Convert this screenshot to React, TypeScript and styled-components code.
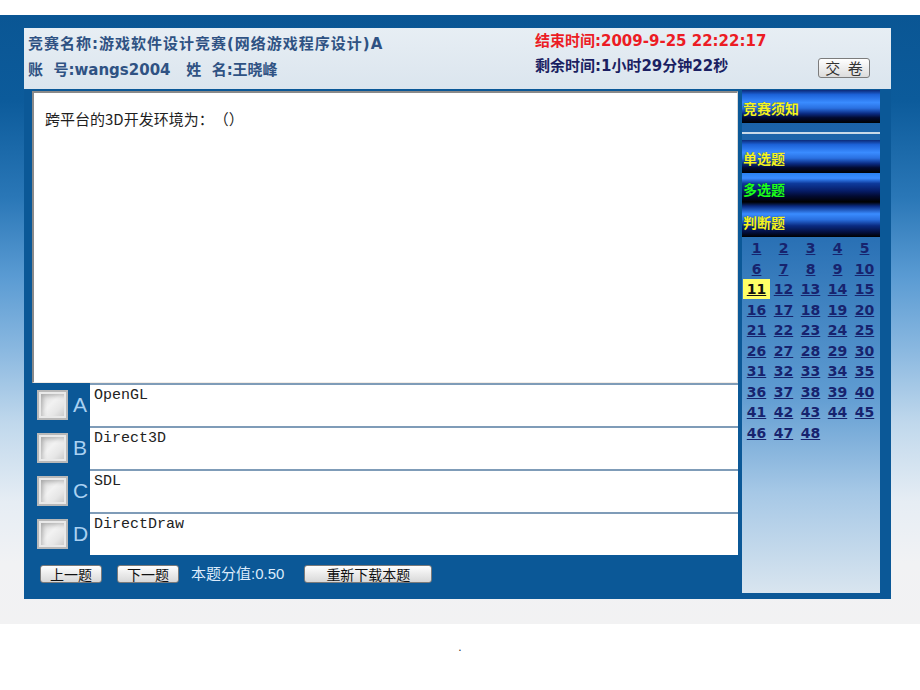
import styled, { createGlobalStyle, css } from "styled-components";

type BarTone = "normal" | "low" | "deep";

const menuItems: { label: string; tone: BarTone; height: number; pad: number; green?: boolean }[] = [
  { label: "单选题", tone: "normal", height: 33, pad: 8 },
  { label: "多选题", tone: "low", height: 29, pad: 6, green: true },
  { label: "判断题", tone: "deep", height: 35, pad: 10 },
];

const options = [
  { key: "A", text: "OpenGL" },
  { key: "B", text: "Direct3D" },
  { key: "C", text: "SDL" },
  { key: "D", text: "DirectDraw" },
];

const questionNumbers = Array.from({ length: 48 }, (_, i) => i + 1);
const currentQuestion = 11;

const App = () => {
  return (
    <>
      <GlobalStyle />
      <Stage>
        <Panel>
          <Header>
            <Info>
              <InfoLine $spread>竞赛名称:游戏软件设计竞赛(网络游戏程序设计)A</InfoLine>
              <InfoLine>
                账&nbsp;&nbsp;号:wangs2004&nbsp;&nbsp;&nbsp;姓&nbsp;&nbsp;名:王晓峰
              </InfoLine>
            </Info>
            <Timer>
              <TimeLine $tone="end">结束时间:2009-9-25 22:22:17</TimeLine>
              <TimeLine $tone="left">剩余时间:1小时29分钟22秒</TimeLine>
            </Timer>
            <SubmitButton>交 卷</SubmitButton>
          </Header>

          <Body>
            <Main>
              <QuestionBox>跨平台的3D开发环境为：（）</QuestionBox>
              {options.map((opt) => (
                <OptionRow key={opt.key}>
                  <Check />
                  <OptionLetter>{opt.key}</OptionLetter>
                  <OptionText>{opt.text}</OptionText>
                </OptionRow>
              ))}
              <Toolbar>
                <ToolButton>上一题</ToolButton>
                <ToolButton>下一题</ToolButton>
                <Score>本题分值:0.50</Score>
                <ToolButton $wide>重新下载本题</ToolButton>
              </Toolbar>
            </Main>

            <Sidebar>
              <MenuBar $tone="normal" $h={33} $pad={8}>
                竞赛须知
              </MenuBar>
              <Divider />
              {menuItems.map((item) => (
                <MenuBar
                  key={item.label}
                  $tone={item.tone}
                  $h={item.height}
                  $pad={item.pad}
                  $green={item.green}
                >
                  {item.label}
                </MenuBar>
              ))}
              <NumberGrid>
                {questionNumbers.map((n) => (
                  <NumLink key={n} href="#" $current={n === currentQuestion}>
                    {n}
                  </NumLink>
                ))}
              </NumberGrid>
            </Sidebar>
          </Body>
        </Panel>
      </Stage>
      <Footer>.</Footer>
    </>
  );
};

export default App;

const GlobalStyle = createGlobalStyle`
  html, body {
    margin: 0;
    padding: 0;
    background: #fff;
  }
  body {
    font-family: "DejaVu Sans", "Noto Sans CJK SC", sans-serif;
    text-spacing-trim: space-all;
  }
`;

const Stage = styled.div`
  margin-top: 15px;
  height: 609px;
  box-sizing: border-box;
  padding: 13px 29px 25px 24px;
  background: linear-gradient(
    to bottom,
    #0a5694 0%,
    #0c5b9b 14%,
    #2a77b7 30%,
    #5a9bd3 43%,
    #8ab8e0 55%,
    #c0d8ec 67%,
    #e6edf4 80%,
    #f1f2f4 90%,
    #f2f2f3 100%
  );
`;

const Panel = styled.div`
  height: 571px;
  background: #0b5897;
  display: flex;
  flex-direction: column;
`;

const Header = styled.div`
  height: 61px;
  flex: none;
  display: flex;
  background: linear-gradient(to bottom, #e7eef4, #dbe5ee);
  font-family: "DejaVu Sans", "Noto Sans CJK SC", sans-serif;
  font-weight: bold;
  font-size: 15px;
  white-space: nowrap;
`;

const Info = styled.div`
  width: 511px;
  box-sizing: border-box;
  padding: 3px 0 0 4px;
  line-height: 26px;
  color: #2f5283;
`;

const InfoLine = styled.div<{ $spread?: boolean }>`
  letter-spacing: ${(p) => (p.$spread ? "1px" : "0")};
`;

const Timer = styled.div`
  flex: 1;
  padding-top: 1px;
  line-height: 25px;
`;

const TimeLine = styled.div<{ $tone: "end" | "left" }>`
  color: ${(p) => (p.$tone === "end" ? "#ec1c24" : "#1b1f62")};
`;

const SubmitButton = styled.button`
  align-self: flex-start;
  margin: 30px 21px 0 0;
  width: 52px;
  height: 20px;
  padding: 0;
  border: 1px solid #7c7c7c;
  border-radius: 3px;
  background: linear-gradient(to bottom, #ffffff, #dcdcdc);
  font: 15px/18px "Noto Sans CJK SC", sans-serif;
  word-spacing: 4px;
  color: #333;
`;

const Body = styled.div`
  flex: 1;
  min-height: 0;
  display: flex;
  gap: 4px;
  padding: 1px 11px 6px 8px;
`;

const Main = styled.div`
  width: 706px;
  margin-top: 1px;
  display: flex;
  flex-direction: column;
`;

const QuestionBox = styled.div`
  height: 292px;
  box-sizing: border-box;
  flex: none;
  background: #fff;
  border-top: 2px solid #8a8a8a;
  border-left: 2px solid #8a8a8a;
  border-right: 1px solid #d8d8d8;
  border-bottom: 1px solid #f2ece6;
  padding: 16px 0 0 11px;
  font: 15px/20px "Noto Sans CJK SC", sans-serif;
  color: #1e1e1e;
`;

const OptionRow = styled.div`
  height: 43px;
  flex: none;
  display: flex;
  align-items: center;
  padding-left: 5px;
`;

const Check = styled.span`
  width: 31px;
  height: 30px;
  box-sizing: border-box;
  border: 2px solid #b9b9b9;
  background: linear-gradient(135deg, #d2d2d2 0%, #f2f2f2 45%, #e6e6e6 70%, #c4c4c4 100%);
  box-shadow: inset 0 0 0 2px #e9e9e9, inset 4px 4px 4px rgba(0, 0, 0, 0.22);
`;

const OptionLetter = styled.span`
  width: 22px;
  box-sizing: border-box;
  padding-left: 5px;
  font: 21px/24px "Liberation Sans", Arial, sans-serif;
  color: #a9d1f2;
`;

const OptionText = styled.div`
  flex: 1;
  align-self: stretch;
  background: #fff;
  border-top: 2px solid #7f9cb8;
  padding: 2px 0 0 4px;
  font: 15px/18px "Liberation Mono", "Courier New", monospace;
  color: #222;
`;

const Toolbar = styled.div`
  flex: 1;
  display: flex;
  align-items: flex-start;
  padding: 10px 0 0 8px;
`;

const ToolButton = styled.button<{ $wide?: boolean }>`
  height: 18px;
  padding: ${(p) => (p.$wide ? "0 21px" : "0 9px")};
  border: 1px solid #7a7a7a;
  border-radius: 3px;
  background: linear-gradient(to bottom, #fefefe, #d8d8d8);
  font: 14px/16px "Noto Sans CJK SC", sans-serif;
  color: #111;

  & + & {
    margin-left: 15px;
  }
`;

const Score = styled.span`
  margin: 0 20px 0 12px;
  font: 15px/18px "Liberation Sans", "Noto Sans CJK SC", sans-serif;
  color: #dcebfb;
`;

const Sidebar = styled.div`
  width: 138px;
  display: flex;
  flex-direction: column;
  background: linear-gradient(
    to bottom,
    #175ea5 0%,
    #2a71b5 30%,
    #5e9bd1 60%,
    #a6c8e6 80%,
    #d9e5ef 100%
  );
`;

const barTones: Record<BarTone, string> = {
  normal:
    "linear-gradient(to bottom, #0c2a78 0%, #1c62d8 14%, #3a8cff 38%, #2a70e0 55%, #0a2a80 72%, #020a30 84%, #000 100%)",
  low: "linear-gradient(to bottom, #2a80f0 0%, #3a8cff 18%, #0e3a9c 36%, #061c66 62%, #020a30 80%, #000 100%)",
  deep: "linear-gradient(to bottom, #000 0%, #0a2a80 12%, #3a8cff 34%, #2a70e0 50%, #0a2a80 68%, #030f40 86%, #000 100%)",
};

const MenuBar = styled.div<{ $tone: BarTone; $h: number; $pad: number; $green?: boolean }>`
  height: ${(p) => p.$h}px;
  box-sizing: border-box;
  flex: none;
  padding: ${(p) => p.$pad}px 0 0 1px;
  background: ${(p) => barTones[p.$tone]};
  font: bold 14px/20px "Noto Sans CJK SC", sans-serif;
  color: ${(p) => (p.$green ? "#1cff1c" : "#f4f422")};
  text-shadow: 0 0 1px rgba(0, 0, 0, 0.6);
`;

const Divider = styled.div`
  height: 2px;
  flex: none;
  margin: 9px 0 6px;
  background: #c9d9e8;
`;

const NumberGrid = styled.div`
  display: grid;
  grid-template-columns: repeat(5, 27px);
  grid-auto-rows: 20.5px;
  padding: 1px 0 0 1px;
`;

const NumLink = styled.a<{ $current?: boolean }>`
  display: flex;
  align-items: center;
  justify-content: center;
  font: bold 14px "DejaVu Sans", Verdana, sans-serif;
  color: #17236e;
  text-decoration: underline;

  ${(p) =>
    p.$current &&
    css`
      background: #ffff66;
      color: #111;
      height: 20px;
    `}
`;

const Footer = styled.div`
  padding-top: 15px;
  text-align: center;
  font: 12px/16px "Liberation Sans", sans-serif;
  color: #333;
`;
